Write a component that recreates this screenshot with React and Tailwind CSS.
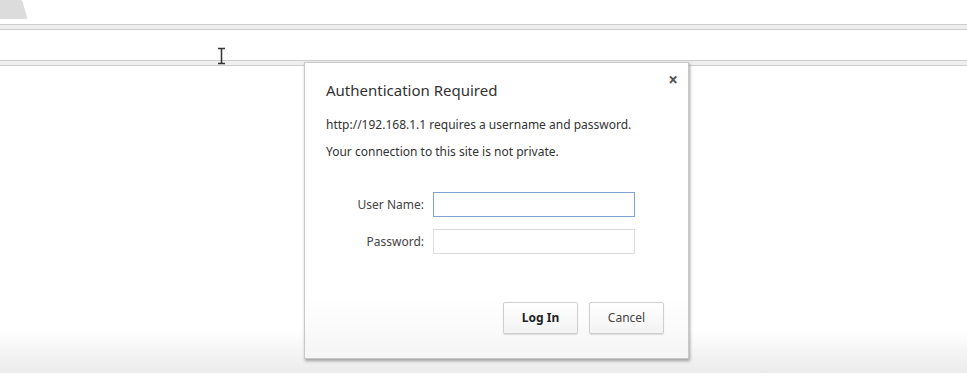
export default function App() {
  return (
    <div className="relative w-[967px] h-[373px] overflow-hidden bg-white flex flex-col font-['Noto_Sans',sans-serif]">
      {/* tab strip */}
      <div className="h-[24px] relative shrink-0">
        <svg className="absolute left-0 top-0" width="40" height="24" viewBox="0 0 40 24">
          <path d="M0 0 H21 Q22 0 22.5 1.5 L27 17 Q27.4 19 25 19 H0 Z" fill="#dcdcdc" />
        </svg>
      </div>
      <div className="h-[6px] shrink-0 border-t border-b border-[#cdcdcd] bg-[#efefef]" />
      <div className="h-[30px] shrink-0 bg-white" />
      <div className="h-[6px] shrink-0 border-t border-b border-[#cdcdcd] bg-[#efefef]" />
      <div className="flex-1 bg-[linear-gradient(to_bottom,#ffffff_0%,#ffffff_86%,#ebebeb_100%)]" />

      {/* text cursor */}
      <svg className="absolute left-[216px] top-[47px]" width="11" height="18" viewBox="0 0 11 18">
        <path d="M2 1.5 H9 M5.5 1.5 V16.5 M2 16.5 H9" stroke="#333" strokeWidth="1.5" fill="none" />
      </svg>

      {/* dialog */}
      <div className="absolute left-[304px] top-[62px] w-[385px] h-[297px] border border-[#c8c8c8] bg-[linear-gradient(to_bottom,#ffffff_0%,#ffffff_80%,#f5f5f5_100%)] shadow-[1px_2px_3px_rgba(0,0,0,0.35)] flex flex-col text-[#333]">
        <button className="absolute right-[10px] top-[7px] text-[#555] text-[17px] leading-[20px] font-bold">×</button>
        <div className="pl-[21px] pt-[16px] text-[15px] leading-[22px] text-[#333]">Authentication Required</div>
        <div className="pl-[21px] mt-[15px] text-[12px] leading-[18px] text-[#333]">http://192.168.1.1 requires a username and password.</div>
        <div className="pl-[21px] mt-[9px] text-[12px] leading-[18px] text-[#333]">Your connection to this site is not private.</div>
        <div className="mt-[31px] flex flex-col gap-[12px]">
          <div className="flex items-center">
            <div className="w-[119px] text-right text-[12px] text-[#444]">User Name:</div>
            <input className="ml-[9px] w-[202px] h-[25px] border border-[#7ea3d4] bg-white outline-none" />
          </div>
          <div className="flex items-center">
            <div className="w-[119px] text-right text-[12px] text-[#444]">Password:</div>
            <input type="password" className="ml-[9px] w-[202px] h-[25px] border border-[#dcdcdc] bg-white outline-none" />
          </div>
        </div>
        <div className="mt-[48px] flex justify-end gap-[11px] pr-[24px]">
          <button className="w-[75px] h-[32px] border border-[#cfcfcf] rounded-[2px] bg-[linear-gradient(to_bottom,#ffffff,#f3f3f3)] shadow-[0_1px_1px_rgba(0,0,0,0.12)] text-[12px] font-bold text-[#222]">Log In</button>
          <button className="w-[75px] h-[32px] border border-[#cfcfcf] rounded-[2px] bg-[linear-gradient(to_bottom,#ffffff,#f3f3f3)] shadow-[0_1px_1px_rgba(0,0,0,0.12)] text-[12px] text-[#444]">Cancel</button>
        </div>
      </div>
    </div>
  );
}
